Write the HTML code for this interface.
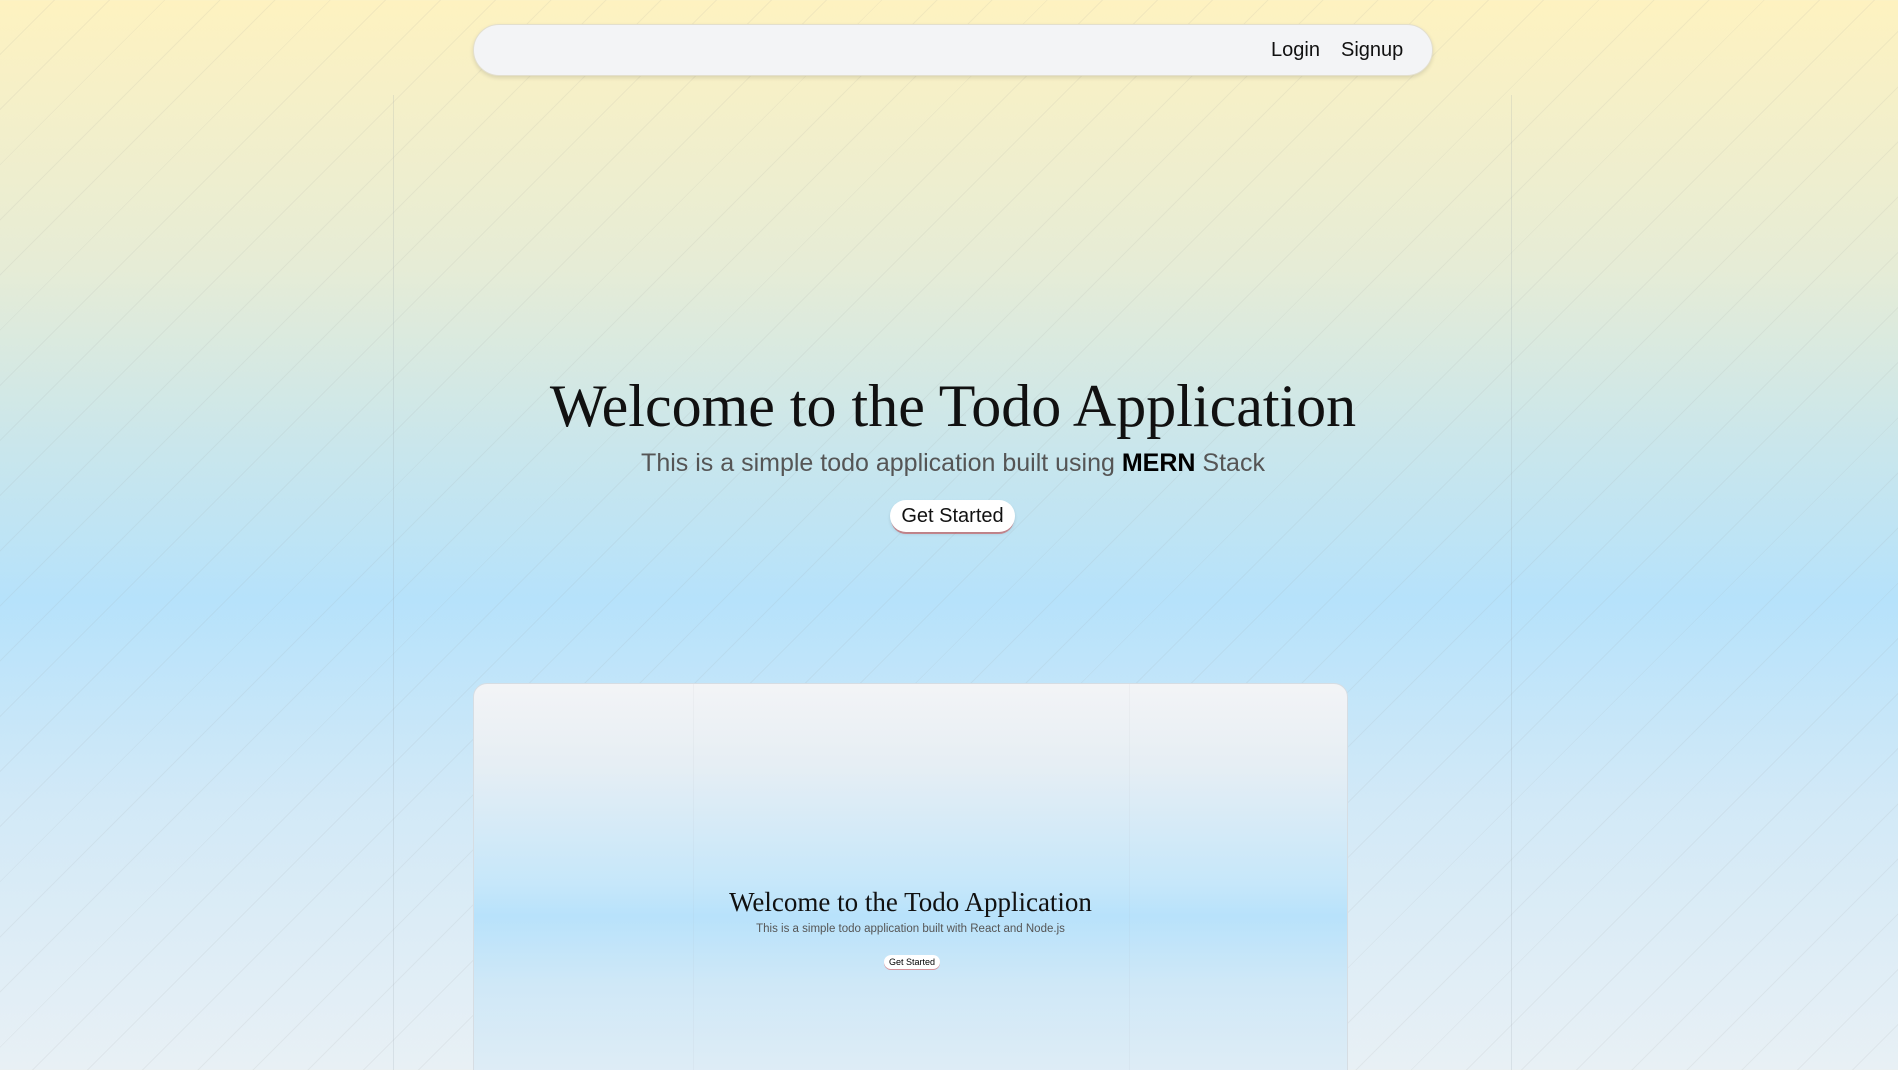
<!DOCTYPE html>
<html><head><meta charset="utf-8"><style>
html,body{margin:0;padding:0;width:1898px;height:1070px;overflow:hidden}
body{position:relative;font-family:"Liberation Sans",sans-serif;
background:linear-gradient(180deg,#fef2c0 0%,#e6ecd6 25%,#c9e6ec 42%,#b6e2fb 56%,#d2e9f7 75%,#e8f0f5 100%);}
.stripes{position:absolute;inset:0;background:repeating-linear-gradient(135deg,transparent 0 38px,rgba(150,150,150,.11) 38px 39px);}
.vl{position:absolute;top:95px;bottom:0;width:1px;background:rgba(150,160,170,.2)}
nav{position:absolute;left:473px;top:24px;width:958px;height:50px;border-radius:26px;background:#f3f4f6;border:1px solid #e3dfcd;box-shadow:0 2px 4px rgba(0,0,0,.12);}
nav a{position:absolute;top:14px;font-size:20px;color:#111;text-decoration:none}
h1{position:absolute;left:0;width:1906px;top:374px;margin:0;text-align:center;font-family:"Liberation Serif",serif;font-weight:normal;font-size:60px;line-height:64px;color:#111}
.sub{position:absolute;left:0;width:1906px;top:449px;text-align:center;font-size:25px;color:#555}
.sub b{color:#000}
.btn{position:absolute;left:890px;top:500px;width:125px;height:32px;border-radius:16px;background:#fff;font-size:20px;line-height:32px;text-align:center;color:#111;box-shadow:0 2px 3px rgba(0,0,0,.12),0 3px 0 -1px rgba(230,60,60,.5)}
.card{position:absolute;left:473px;top:683px;width:873px;height:400px;border-radius:14px 14px 0 0;border:1px solid #d6dde3;
background:linear-gradient(180deg,#f3f4f6 0%,#e6eef4 20%,#c6e7fa 50%,#b8e2fb 58%,#cfe8f7 75%,#e0edf6 100%);overflow:hidden}
.cl{position:absolute;top:0;bottom:0;width:1px;background:rgba(160,170,180,.08)}
.c1{position:absolute;left:0;width:873px;top:203px;text-align:center;font-family:"Liberation Serif",serif;font-size:27px;color:#111}
.c2{position:absolute;left:0;width:873px;top:239px;text-align:center;font-size:11.5px;color:#555}
.c3{position:absolute;left:410px;top:271px;width:56px;height:14px;border-radius:7px;background:#fff;font-size:9px;line-height:14px;text-align:center;box-shadow:0 1px 0 rgba(230,60,60,.5)}
</style></head><body>
<div class="stripes"></div>
<div class="vl" style="left:393px"></div><div class="vl" style="left:1511px"></div>
<nav><a style="left:797px">Login</a><a style="left:867px">Signup</a></nav>
<h1>Welcome to the Todo Application</h1>
<div class="sub">This is a simple todo application built using <b>MERN</b> Stack</div>
<div class="btn">Get Started</div>
<div class="card">
<div class="cl" style="left:219px"></div><div class="cl" style="left:655px"></div>
<div class="c1">Welcome to the Todo Application</div>
<div class="c2">This is a simple todo application built with React and Node.js</div>
<div class="c3">Get Started</div>
</div>
</body></html>
